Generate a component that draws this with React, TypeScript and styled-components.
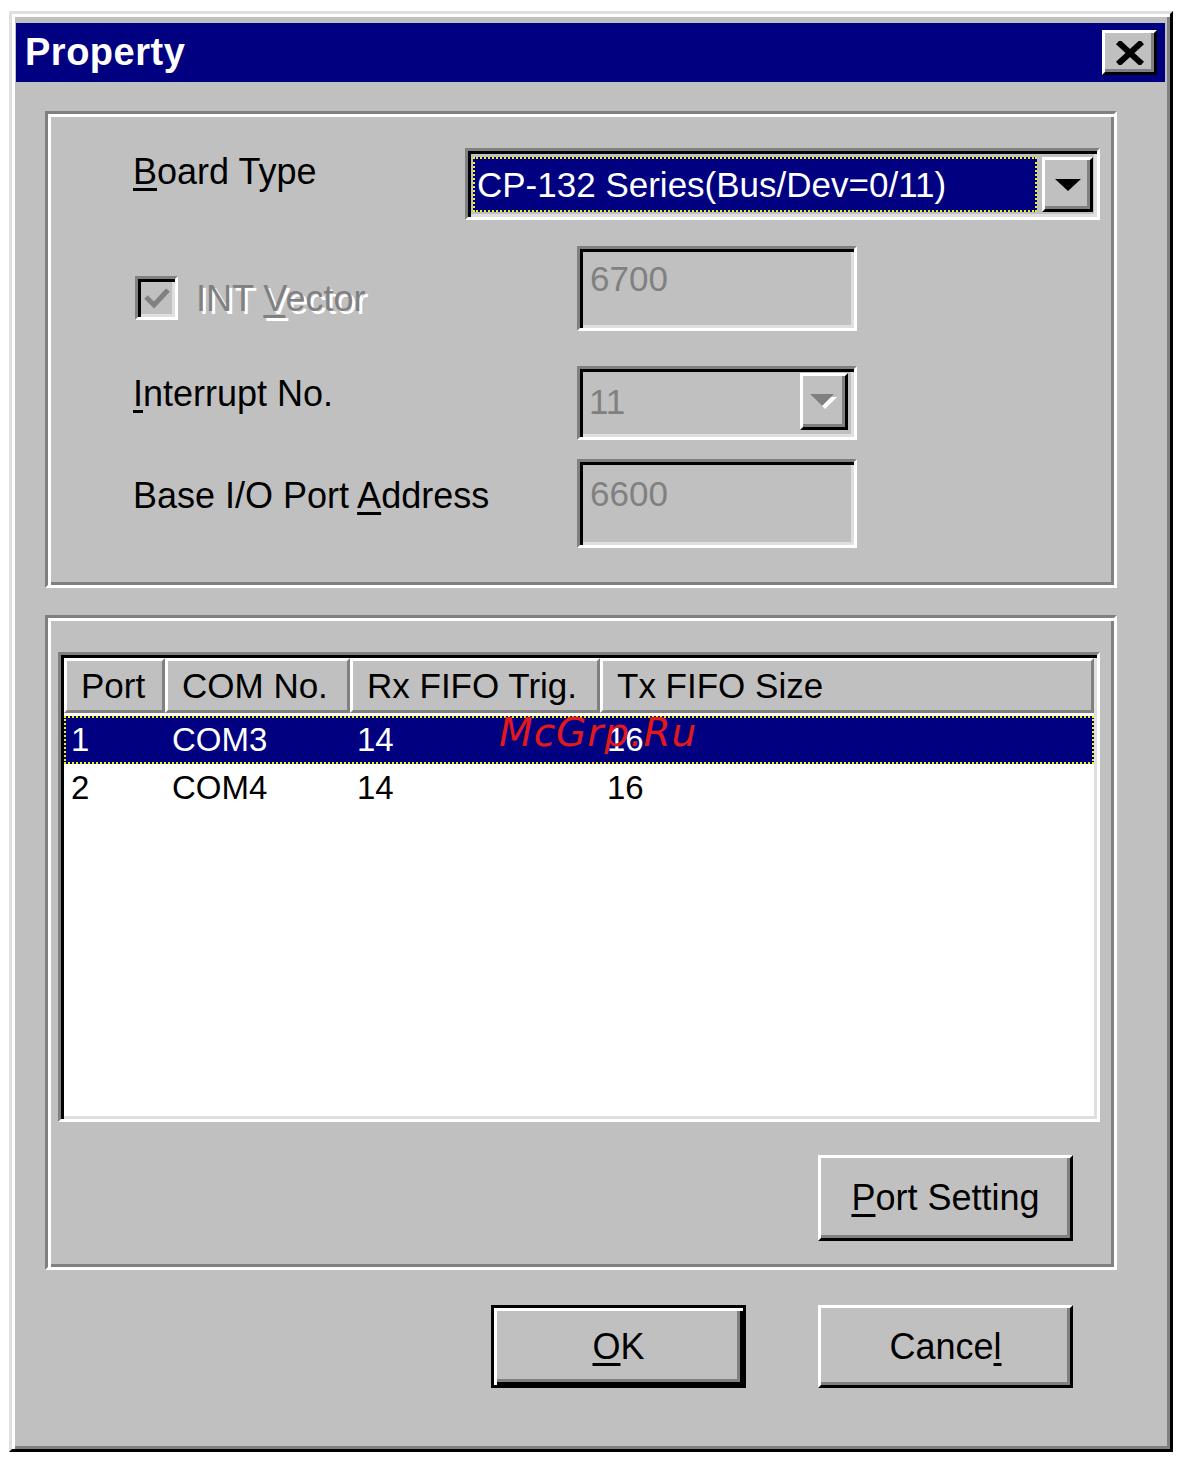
import React from "react";
import styled, { createGlobalStyle, css } from "styled-components";

const GlobalStyle = createGlobalStyle`
  html, body { margin: 0; padding: 0; background: #fff; }
  body { font-family: "Liberation Sans", Arial, sans-serif; color: #000; }
  * { box-sizing: border-box; }
`;

const raised = css`
  border: 3px solid;
  border-color: #fff #000 #000 #fff;
  box-shadow: inset -3px -3px #808080;
`;

const sunken = css`
  border: 3px solid;
  border-color: #808080 #fff #fff #808080;
  box-shadow: inset 3px 3px #000, inset -3px -3px #dfdfdf;
`;

const etched = css`
  border: 3px solid;
  border-color: #808080 #fff #fff #808080;
  box-shadow: inset 3px 3px #fff, inset -3px -3px #808080;
`;

const Window = styled.div`
  width: 1164px;
  height: 1441px;
  margin: 11px 0 0 9px;
  background: #c0c0c0;
  border: 3px solid;
  border-color: #dfdfdf #000 #000 #dfdfdf;
  box-shadow: inset 3px 3px #fff, inset -3px -3px #808080;
  padding: 9px 5px 0 4px;
  display: flex;
  flex-direction: column;
`;

const TitleBar = styled.div`
  height: 59px;
  background: #000080;
  display: flex;
  align-items: center;
  justify-content: space-between;
  padding: 0 8px 0 9px;
`;

const Title = styled.span`
  color: #fff;
  font-weight: bold;
  font-size: 38px;
  letter-spacing: 0.5px;
`;

const CloseButton = styled.div`
  width: 55px;
  height: 45px;
  background: #c0c0c0;
  ${raised};
  display: flex;
  align-items: center;
  justify-content: center;
`;

const Content = styled.div`
  display: flex;
  flex-direction: column;
  padding: 29px 48px 0 29px;
`;

const Group = styled.div<{ $h: number; $mt?: number; $pad: string }>`
  ${etched};
  height: ${(p) => p.$h}px;
  margin-top: ${(p) => p.$mt ?? 0}px;
  padding: ${(p) => p.$pad};
  display: flex;
  flex-direction: column;
`;

const Row = styled.div<{ $h: number; $mt?: number }>`
  display: flex;
  align-items: flex-start;
  height: ${(p) => p.$h}px;
  margin-top: ${(p) => p.$mt ?? 0}px;
`;

const Label = styled.div<{ $w: number; $pt: number }>`
  width: ${(p) => p.$w}px;
  flex-shrink: 0;
  padding-top: ${(p) => p.$pt}px;
  font-size: 36px;
  line-height: 41px;
  display: flex;
  align-items: center;
  white-space: nowrap;
`;

const Key = styled.u`
  text-decoration-thickness: 3px;
  text-underline-offset: 4px;
`;

const CheckBox = styled.div`
  width: 43px;
  height: 44px;
  ${sunken};
  background: #c0c0c0;
  margin: 0 18px 0 2px;
  display: flex;
  align-items: center;
  justify-content: center;
  flex-shrink: 0;
`;

const DisabledText = styled.span`
  color: #808080;
  text-shadow: 3px 3px 0 #fff;
`;

const Field = styled.div<{ $h: number; $pt: number }>`
  width: 280px;
  height: ${(p) => p.$h}px;
  ${sunken};
  background: #c0c0c0;
  color: #808080;
  font-size: 35px;
  line-height: 41px;
  padding: ${(p) => p.$pt}px 0 0 10px;
`;

const Combo = styled.div<{ $w: number; $h: number; $pad: string }>`
  width: ${(p) => p.$w}px;
  height: ${(p) => p.$h}px;
  ${sunken};
  background: #c0c0c0;
  display: flex;
  gap: 5px;
  padding: ${(p) => p.$pad};
`;

const Selection = styled.div`
  flex: 1;
  background: #000080;
  color: #fff;
  border: 2px dotted #f4f400;
  font-size: 35px;
  display: flex;
  align-items: center;
  padding-left: 2px;
  white-space: nowrap;
`;

const ComboText = styled.div`
  flex: 1;
  color: #808080;
  font-size: 35px;
  display: flex;
  align-items: center;
  padding-left: 6px;
`;

const DropButton = styled.div<{ $w: number }>`
  width: ${(p) => p.$w}px;
  flex-shrink: 0;
  background: #c0c0c0;
  ${raised};
  display: flex;
  align-items: center;
  justify-content: center;
`;

const ListView = styled.div`
  position: relative;
  height: 470px;
  ${sunken};
  background: #fff;
  padding: 3px;
  display: flex;
  flex-direction: column;
`;

const HeaderRow = styled.div`
  display: flex;
  height: 55px;
  flex-shrink: 0;
`;

const HeaderCell = styled.div<{ $w?: number }>`
  ${(p) => (p.$w ? `width: ${p.$w}px; flex-shrink: 0;` : "flex: 1;")}
  background: #c0c0c0;
  border: 3px solid;
  border-color: #fff #808080 #808080 #fff;
  font-size: 35px;
  display: flex;
  align-items: center;
  padding-left: 14px;
  white-space: nowrap;
`;

const ItemRow = styled.div<{ $selected?: boolean; $mt?: number }>`
  display: grid;
  grid-template-columns: 101px 185px 250px 1fr;
  height: 48px;
  margin-top: ${(p) => p.$mt ?? 0}px;
  align-items: center;
  font-size: 33px;
  color: ${(p) => (p.$selected ? "#fff" : "#000")};
  background: ${(p) => (p.$selected ? "#000080" : "transparent")};
  outline: ${(p) => (p.$selected ? "2px dotted #f4f400" : "none")};
  outline-offset: -2px;
`;

const Cell = styled.div`
  padding-left: 7px;
  white-space: nowrap;
`;

const Watermark = styled.div`
  position: absolute;
  left: 438px;
  top: 57px;
  font-family: "DejaVu Sans", "Liberation Sans", sans-serif;
  font-style: italic;
  font-size: 39px;
  line-height: 42px;
  letter-spacing: 1px;
  color: #e01a1a;
  pointer-events: none;
`;

const PushButton = styled.div<{ $h: number; $default?: boolean; $mt?: number; $mr?: number }>`
  width: 255px;
  height: ${(p) => p.$h}px;
  margin-top: ${(p) => p.$mt ?? 0}px;
  margin-right: ${(p) => p.$mr ?? 0}px;
  background: #c0c0c0;
  font-size: 36px;
  display: flex;
  align-items: center;
  justify-content: center;
  flex-shrink: 0;
  ${(p) =>
    p.$default
      ? css`
          border: 3px solid #000;
          box-shadow: inset 3px 3px #fff, inset -3px -3px #000, inset -6px -6px #808080;
        `
      : raised}
`;

const PortSettingButton = styled(PushButton)`
  align-self: flex-end;
`;

const Footer = styled.div`
  display: flex;
  justify-content: flex-end;
  gap: 72px;
  margin-top: 35px;
  padding-right: 44px;
`;

const ports = [
  { port: "1", com: "COM3", rx: "14", tx: "16" },
  { port: "2", com: "COM4", rx: "14", tx: "16" },
];

const App = () => {
  return (
    <>
      <GlobalStyle />
      <Window>
        <TitleBar>
          <Title>Property</Title>
          <CloseButton>
            <svg width="28" height="24" viewBox="0 0 28 24">
              <path d="M2 1 L26 23 M26 1 L2 23" stroke="#000" strokeWidth="6" />
            </svg>
          </CloseButton>
        </TitleBar>

        <Content>
          <Group $h={477} $pad="34px 0 0 85px">
            <Row $h={72}>
              <Label $w={332} $pt={3}>
                <span>
                  <Key>B</Key>oard Type
                </span>
              </Label>
              <Combo $w={635} $h={72} $pad="6px 4px 5px 5px">
                <Selection>CP-132 Series(Bus/Dev=0/11)</Selection>
                <DropButton $w={51}>
                  <svg width="26" height="12" viewBox="0 0 26 12">
                    <polygon points="0,0 26,0 13,12" fill="#000" />
                  </svg>
                </DropButton>
              </Combo>
            </Row>

            <Row $h={85} $mt={26}>
              <Label $w={444} $pt={30}>
                <CheckBox>
                  <svg width="26" height="22" viewBox="0 0 26 22">
                    <polyline points="2,10 10,18 24,3" fill="none" stroke="#808080" strokeWidth="5" />
                  </svg>
                </CheckBox>
                <DisabledText>
                  INT <Key>V</Key>ector
                </DisabledText>
              </Label>
              <Field $h={85} $pt={9}>6700</Field>
            </Row>

            <Row $h={74} $mt={35}>
              <Label $w={444} $pt={7}>
                <span>
                  <Key>I</Key>nterrupt No.
                </span>
              </Label>
              <Combo $w={280} $h={74} $pad="4px 6px 7px 3px">
                <ComboText>11</ComboText>
                <DropButton $w={48}>
                  <svg width="28" height="16" viewBox="0 0 28 16">
                    <polygon points="3,3 27,3 15,15" fill="#fff" />
                    <polygon points="0,0 24,0 12,12" fill="#808080" />
                  </svg>
                </DropButton>
              </Combo>
            </Row>

            <Row $h={89} $mt={19}>
              <Label $w={444} $pt={16}>
                <span>
                  Base I/O Port <Key>A</Key>ddress
                </span>
              </Label>
              <Field $h={89} $pt={11}>6600</Field>
            </Row>
          </Group>

          <Group $h={655} $mt={27} $pad="34px 14px 0 10px">
            <ListView>
              <HeaderRow>
                <HeaderCell $w={101}>Port</HeaderCell>
                <HeaderCell $w={185}>COM No.</HeaderCell>
                <HeaderCell $w={250}>Rx FIFO Trig.</HeaderCell>
                <HeaderCell>Tx FIFO Size</HeaderCell>
              </HeaderRow>
              {ports.map((p, i) => (
                <ItemRow key={p.port} $selected={i === 0} $mt={i === 0 ? 3 : 0}>
                  <Cell>{p.port}</Cell>
                  <Cell>{p.com}</Cell>
                  <Cell>{p.rx}</Cell>
                  <Cell>{p.tx}</Cell>
                </ItemRow>
              ))}
              <Watermark>McGrp.Ru</Watermark>
            </ListView>
            <PortSettingButton $h={86} $mt={33} $mr={27}>
              <span>
                <Key>P</Key>ort Setting
              </span>
            </PortSettingButton>
          </Group>

          <Footer>
            <PushButton $h={83} $default>
              <span>
                <Key>O</Key>K
              </span>
            </PushButton>
            <PushButton $h={83}>
              <span>
                Cance<Key>l</Key>
              </span>
            </PushButton>
          </Footer>
        </Content>
      </Window>
    </>
  );
};

export default App;
